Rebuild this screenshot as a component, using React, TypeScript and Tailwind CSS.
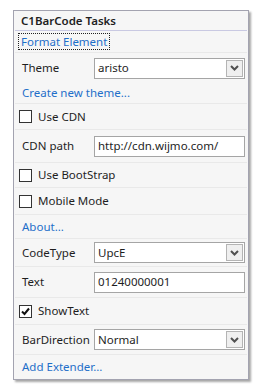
import React from 'react';

const font = { fontFamily: '"Noto Sans", "Open Sans", sans-serif' };

const Chevron = () => (
  <svg width="9" height="6" viewBox="0 0 9 6" className="block">
    <polyline points="1,1 4.5,4.5 8,1" fill="none" stroke="#505050" strokeWidth="2" />
  </svg>
);

const Select: React.FC<{ value: string }> = ({ value }) => (
  <div className="flex h-[21px] w-[151px] items-center border border-[#a5a5a5] bg-white pl-[3px] pr-px">
    <span className="flex-1 text-[11.5px] leading-none text-[#1e1e1e]">{value}</span>
    <div className="flex h-[17px] w-[17px] items-center justify-center border border-[#b4b4b4] bg-[#efefef]">
      <Chevron />
    </div>
  </div>
);

const Input: React.FC<{ value: string }> = ({ value }) => (
  <div className="flex h-[21px] w-[151px] items-center border border-[#a5a5a5] bg-white pl-[3px]">
    <span className="text-[11.5px] leading-none text-[#1e1e1e]">{value}</span>
  </div>
);

const Check: React.FC<{ checked?: boolean }> = ({ checked }) => (
  <div className="flex h-[13px] w-[13px] items-center justify-center border border-[#333333] bg-white">
    {checked && (
      <svg width="9" height="9" viewBox="0 0 9 9" className="block">
        <polyline points="1,4.5 3.5,7 8,1.5" fill="none" stroke="#111111" strokeWidth="2" />
      </svg>
    )}
  </div>
);

const FieldRow: React.FC<{ label: string; h: string; children: React.ReactNode; border?: boolean }> = ({ label, h, children, border = true }) => (
  <div className={`flex items-center justify-between pl-[7px] pr-[2px] ${h} ${border ? 'border-b border-[#e9e9e9]' : ''}`}>
    <span className="text-[11.5px] text-[#1e1e1e]">{label}</span>
    {children}
  </div>
);

const LinkRow: React.FC<{ text: string; h: string; border?: boolean }> = ({ text, h, border = true }) => (
  <div className={`flex items-center pl-[7px] ${h} ${border ? 'border-b border-[#e9e9e9]' : ''}`}>
    <span className="text-[11.5px] text-[#1f6fc9]">{text}</span>
  </div>
);

const CheckRow: React.FC<{ text: string; h: string; checked?: boolean }> = ({ text, h, checked }) => (
  <div className={`flex items-center gap-[6px] border-b border-[#e9e9e9] pl-[4px] ${h}`}>
    <Check checked={checked} />
    <span className="text-[11.5px] text-[#1e1e1e]">{text}</span>
  </div>
);

export default function App() {
  return (
    <div className="h-[386px] w-[255px] bg-white pl-[13px] pt-[10px]" style={font}>
      <div className="w-[236px] border border-[#a3a3b0] bg-[#f6f6f6] px-px shadow-[2px_2px_2px_rgba(0,0,0,0.35)]">
        <div className="flex h-[20px] items-center border-b border-[#c9c9e2] pl-[6px]">
          <span className="text-[11.5px] font-semibold text-[#1e1e1e]">C1BarCode Tasks</span>
        </div>
        <div className="flex h-[22px] items-center border-b border-[#e9e9e9] pl-[3px]">
          <span className="border border-dotted border-[#222222] px-[2px] text-[11.5px] leading-[15px] text-[#1f6fc9]">Format Element</span>
        </div>
        <FieldRow label="Theme" h="h-[30px]" border={false}>
          <Select value="aristo" />
        </FieldRow>
        <LinkRow text="Create new theme..." h="h-[21px]" />
        <CheckRow text="Use CDN" h="h-[26px]" />
        <FieldRow label="CDN path" h="h-[33px]">
          <Input value="http://cdn.wijmo.com/" />
        </FieldRow>
        <CheckRow text="Use BootStrap" h="h-[25px]" />
        <CheckRow text="Mobile Mode" h="h-[27px]" />
        <LinkRow text="About..." h="h-[24px]" />
        <FieldRow label="CodeType" h="h-[28px]">
          <Select value="UpcE" />
        </FieldRow>
        <FieldRow label="Text" h="h-[31px]">
          <Input value="01240000001" />
        </FieldRow>
        <CheckRow text="ShowText" h="h-[27px]" checked />
        <FieldRow label="BarDirection" h="h-[30px]">
          <Select value="Normal" />
        </FieldRow>
        <LinkRow text="Add Extender..." h="h-[24px]" border={false} />
      </div>
    </div>
  );
}
